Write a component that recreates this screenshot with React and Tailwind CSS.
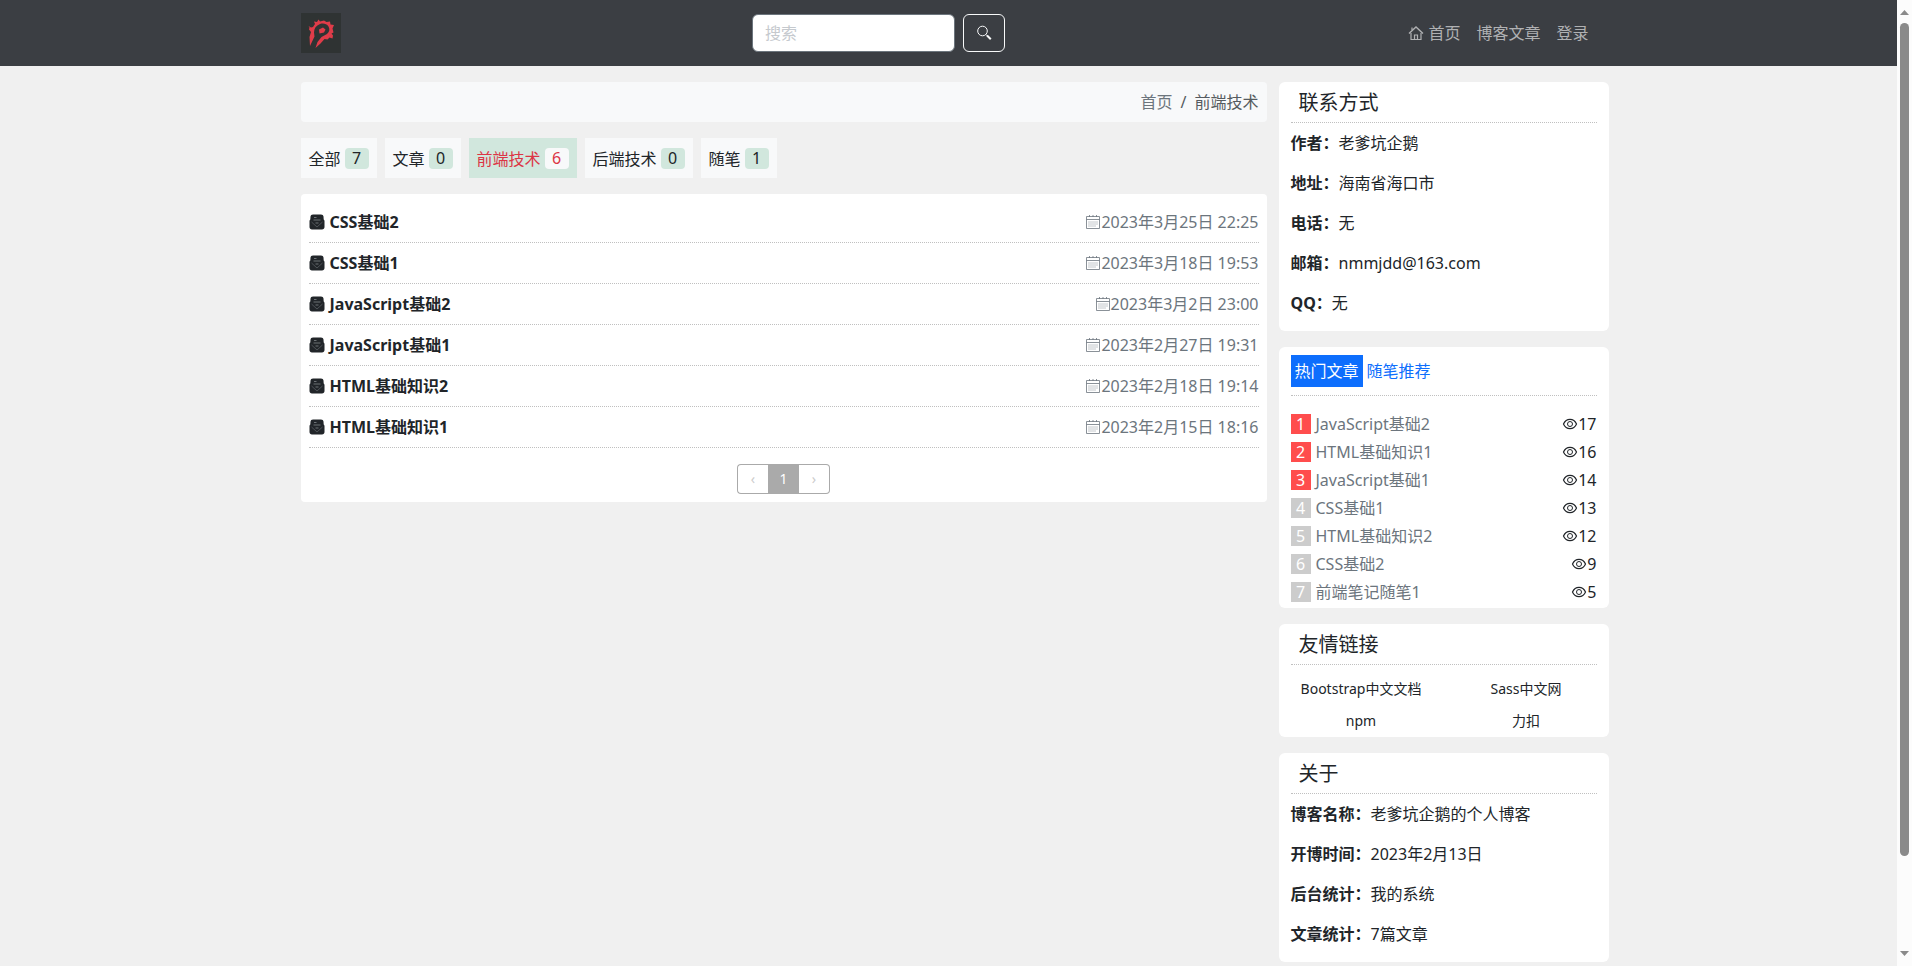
import React, { useState } from "react";

const categories = [
    { name: "全部", count: 7 },
    { name: "文章", count: 0 },
    { name: "前端技术", count: 6 },
    { name: "后端技术", count: 0 },
    { name: "随笔", count: 1 },
];

const articles = [
    { title: "CSS基础2", date: "2023年3月25日 22:25" },
    { title: "CSS基础1", date: "2023年3月18日 19:53" },
    { title: "JavaScript基础2", date: "2023年3月2日 23:00" },
    { title: "JavaScript基础1", date: "2023年2月27日 19:31" },
    { title: "HTML基础知识2", date: "2023年2月18日 19:14" },
    { title: "HTML基础知识1", date: "2023年2月15日 18:16" },
];

const hotArticles = [
    { title: "JavaScript基础2", views: 17 },
    { title: "HTML基础知识1", views: 16 },
    { title: "JavaScript基础1", views: 14 },
    { title: "CSS基础1", views: 13 },
    { title: "HTML基础知识2", views: 12 },
    { title: "CSS基础2", views: 9 },
    { title: "前端笔记随笔1", views: 5 },
];

const contact = [
    { label: "作者", value: "老爹坑企鹅" },
    { label: "地址", value: "海南省海口市" },
    { label: "电话", value: "无" },
    { label: "邮箱", value: "nmmjdd@163.com" },
    { label: "QQ", value: "无" },
];

const about = [
    { label: "博客名称", value: "老爹坑企鹅的个人博客" },
    { label: "开博时间", value: "2023年2月13日" },
    { label: "后台统计", value: "我的系统" },
    { label: "文章统计", value: "7篇文章" },
];

const links = ["Bootstrap中文文档", "Sass中文网", "npm", "力扣"];

function Logo() {
    return (
        <svg viewBox="0 0 40 40" className="size-10" aria-label="logo">
            <rect width="40" height="40" fill="#2f3333" />
            {/* spiked ring */}
            <path
                fill="#e03c49"
                d="M7.500 13l2.500 1.500 2-.500 2-3-1-2.500 3 .500 1.500-2.500 1.500 2 4-1 2.500 1.500 3.500-.500.500 3 3.500.500-1.500 3.500 1 4-2 1 1.500 2-.500 3-3-1-2 2-3-.500-4 4.500-5 4.500 2-6 4-5 5.500-3c2.500-2 3-5 1.500-7.500-2-3-5.500-3.500-8.500-2.500-4 1.500-6 4.500-6 8.500l.500 4-4.500 9.500-.500-9 1.500-5-2-2.500.500-2z"
            />
            <path fill="#e03c49" d="M18 16.500l4-2 2.500 2-1.500 3-4.500 1z" />
        </svg>
    );
}

function HomeIcon() {
    return (
        <svg viewBox="0 0 16 16" className="size-4" fill="none" stroke="currentColor">
            <path strokeWidth="1.400" d="M1 8.500l7-6.500 7 6.500" />
            <path strokeWidth="1.200" d="M3 8v6.500h10V8M6.500 14.500v-4.500h3v4.500M4 5V2.500" />
        </svg>
    );
}

function SearchIcon() {
    return (
        <svg viewBox="0 0 16 16" className="size-4" fill="none" stroke="currentColor">
            <circle cx="6.500" cy="6" r="4.800" strokeWidth="1" />
            <path d="M10 9.500l1.500 1.500" strokeWidth="1" />
            <path d="M11 10.500l3.800 3.800" strokeWidth="2" />
        </svg>
    );
}

function PaperIcon() {
    return (
        <svg viewBox="0 0 16 16" className="size-4">
            <path fill="#212529" d="M4 .500h8c1.500 0 2.300.800 2.500 2l.200 3c.600.300.800.900.800 1.600v5.900c0 1.600-1 2.500-2.500 2.500H3C1.500 15.500.500 14.600.500 13V7.100c0-.700.200-1.300.800-1.600l.200-3C1.700 1.300 2.500.500 4 .500z" />
            <path fill="none" stroke="#8d9296" strokeWidth=".7" d="M5 3.500h2.500M4.500 6h7M6.500 9h3" />
            <path fill="none" stroke="#6c7176" strokeWidth=".6" d="M2.500 8l5.500 5 5.500-5" />
        </svg>
    );
}

function CalendarIcon() {
    return (
        <svg viewBox="0 0 16 16" className="size-4" fill="none" stroke="currentColor">
            <path strokeWidth=".8" d="M1.500 2.500h13v12h-13zM1.500 5.500h13M4.500 1v2M8 1v2M11.500 1v2" />
            <path strokeWidth=".8" strokeDasharray="1 1" d="M3.500 8h9M3.500 10h9M3.500 12h7" />
        </svg>
    );
}

function EyeIcon() {
    return (
        <svg viewBox="0 0 16 16" className="size-4" fill="none" stroke="currentColor">
            <path strokeWidth="1.200" d="M1.500 8C2.800 5 5.200 3.300 8 3.300s5.200 1.700 6.500 4.700c-1.300 3-3.700 4.700-6.500 4.700S2.800 11 1.500 8z" />
            <circle cx="8" cy="8" r="2.500" strokeWidth="1" />
        </svg>
    );
}

function Card({ title, children }) {
    return (
        <section className="bg-white rounded-md px-3">
            {title && (
                <h5 className="h-[41px] px-2 pt-[5px] text-xl leading-8 border-b border-dotted border-[#c0c0c0]">{title}</h5>
            )}
            {children}
        </section>
    );
}

function InfoList({ items }) {
    return (
        <div className="pt-2">
            {items.map((item) => (
                <p key={item.label} className="mb-4 leading-6">
                    <b>{item.label}：</b>
                    {item.value}
                </p>
            ))}
        </div>
    );
}

function Navbar() {
    return (
        <nav className="bg-[#3b3e43]">
            <div className="max-w-[1320px] mx-auto px-3 py-[13px] flex items-center justify-between">
                <a href="#" className="mr-4">
                    <Logo />
                </a>
                <form className="flex gap-2" onSubmit={(e) => e.preventDefault()}>
                    <input
                        type="search"
                        placeholder="搜索"
                        aria-label="搜索"
                        className="w-[203px] h-[38px] px-3 bg-white rounded-md border border-[#6c757d] placeholder:text-[#c5c9ce]"
                    />
                    <button aria-label="搜索" className="w-[42px] h-[38px] flex items-center justify-center rounded-md border border-[#f8f9fa] text-[#f8f9fa]">
                        <SearchIcon />
                    </button>
                </form>
                <div className="flex text-[#b0b1b3]">
                    <a href="#" className="px-2 flex items-center gap-1">
                        <HomeIcon />
                        首页
                    </a>
                    <a href="#" className="px-2">博客文章</a>
                    <a href="#" className="px-2">登录</a>
                </div>
            </div>
        </nav>
    );
}

function ScrollBar() {
    return (
        <div className="w-[15px] shrink-0 bg-[#fcfcfc] flex flex-col items-center pt-2 pb-2" aria-hidden="true">
            <svg viewBox="0 0 9 8" className="w-[9px] h-2" fill="#8a8a8a">
                <path d="M4.500 2L9 7H0z" />
            </svg>
            <div className="flex-1 w-[9px] pt-[7px] pb-3">
                <div className="h-[91%] rounded-full bg-[#8a8a8a]" />
            </div>
            <svg viewBox="0 0 9 8" className="w-[9px] h-2" fill="#8a8a8a">
                <path d="M4.500 6L9 1H0z" />
            </svg>
        </div>
    );
}

function App() {
    const [active, setActive] = useState("前端技术");
    const [tab, setTab] = useState("热门文章");

    return (
        <div className="h-screen flex bg-[#f0f0f0] text-[#212529] text-base font-['Noto_Sans','Noto_Sans_CJK_SC',sans-serif]">
            <div className="flex-1 overflow-y-auto [scrollbar-width:none]">
                <Navbar />

                <div className="max-w-[1320px] mx-auto py-4 flex items-start">
                    <main className="flex-1 px-3 flex flex-col gap-4">
                        <ol className="h-10 px-2 flex items-center justify-end gap-2 rounded-sm bg-[#f8f9fa]">
                            <li><a href="#" className="text-[#6c757d]">首页</a></li>
                            <li className="text-[#555b60]">/</li>
                            <li className="text-[#555b60]">前端技术</li>
                        </ol>

                        <div className="flex gap-2">
                            {categories.map((item) => (
                                <button
                                    key={item.name}
                                    onClick={() => setActive(item.name)}
                                    className={
                                        item.name === active
                                            ? "h-10 px-2 pt-px flex items-center gap-1 bg-[#d1e7dd] text-[#dc3545]"
                                            : "h-10 px-2 pt-px flex items-center gap-1 bg-[#f8f9fa]"
                                    }
                                >
                                    {item.name}
                                    <span
                                        className={
                                            item.name === active
                                                ? "w-6 h-[21px] leading-5 rounded-sm bg-[#f8f9fa]"
                                                : "w-6 h-[21px] leading-5 rounded-sm bg-[#d1e7dd]"
                                        }
                                    >
                                        {item.count}
                                    </span>
                                </button>
                            ))}
                        </div>

                        <div className="p-2 rounded-sm bg-white">
                            <ul>
                                {articles.map((item) => (
                                    <li key={item.title} className="h-[41px] flex items-center justify-between border-b border-dotted border-[#c0c0c0]">
                                        <a href="#" className="flex items-center gap-[5px] font-bold">
                                            <PaperIcon />
                                            {item.title}
                                        </a>
                                        <span className="flex items-center text-[#6c757d]">
                                            <CalendarIcon />
                                            {item.date}
                                        </span>
                                    </li>
                                ))}
                            </ul>
                            <div className="mt-4 flex justify-center text-sm">
                                <button className="w-[31px] h-[30px] rounded-l-sm border border-r-0 border-[#aaa] text-[#ccc]">‹</button>
                                <button className="w-[31px] h-[30px] bg-[#aaa] text-white">1</button>
                                <button className="w-[31px] h-[30px] rounded-r-sm border border-l-0 border-[#aaa] text-[#ccc]">›</button>
                            </div>
                        </div>
                    </main>

                    <aside className="w-1/4 flex flex-col gap-4">
                        <Card title="联系方式">
                            <InfoList items={contact} />
                        </Card>

                        <Card>
                            <div className="py-2 flex border-b border-dotted border-[#c0c0c0]">
                                {["热门文章", "随笔推荐"].map((name) => (
                                    <button
                                        key={name}
                                        onClick={() => setTab(name)}
                                        className={name === tab ? "h-8 px-1 bg-[#0d6efd] text-white" : "h-8 px-1 text-[#0d6efd]"}
                                    >
                                        {name}
                                    </button>
                                ))}
                            </div>
                            <ul className="pt-4">
                                {hotArticles.map((item, index) => (
                                    <li key={item.title} className="h-6 mb-1 flex items-center">
                                        <span
                                            className={
                                                index < 3
                                                    ? "size-5 leading-5 text-center text-white bg-[#ff4d4d]"
                                                    : "size-5 leading-5 text-center text-white bg-[#ccc]"
                                            }
                                        >
                                            {index + 1}
                                        </span>
                                        <a href="#" className="ml-[5px] flex-1 text-[#6c757d]">{item.title}</a>
                                        <EyeIcon />
                                        {item.views}
                                    </li>
                                ))}
                            </ul>
                        </Card>

                        <Card title="友情链接">
                            <div className="-mx-3 pt-2 grid grid-cols-2 text-sm text-center">
                                {links.map((name) => (
                                    <a key={name} href="#" className="leading-8">{name}</a>
                                ))}
                            </div>
                        </Card>

                        <Card title="关于">
                            <InfoList items={about} />
                        </Card>
                    </aside>
                </div>
            </div>
            <ScrollBar />
        </div>
    );
}

export default App;
